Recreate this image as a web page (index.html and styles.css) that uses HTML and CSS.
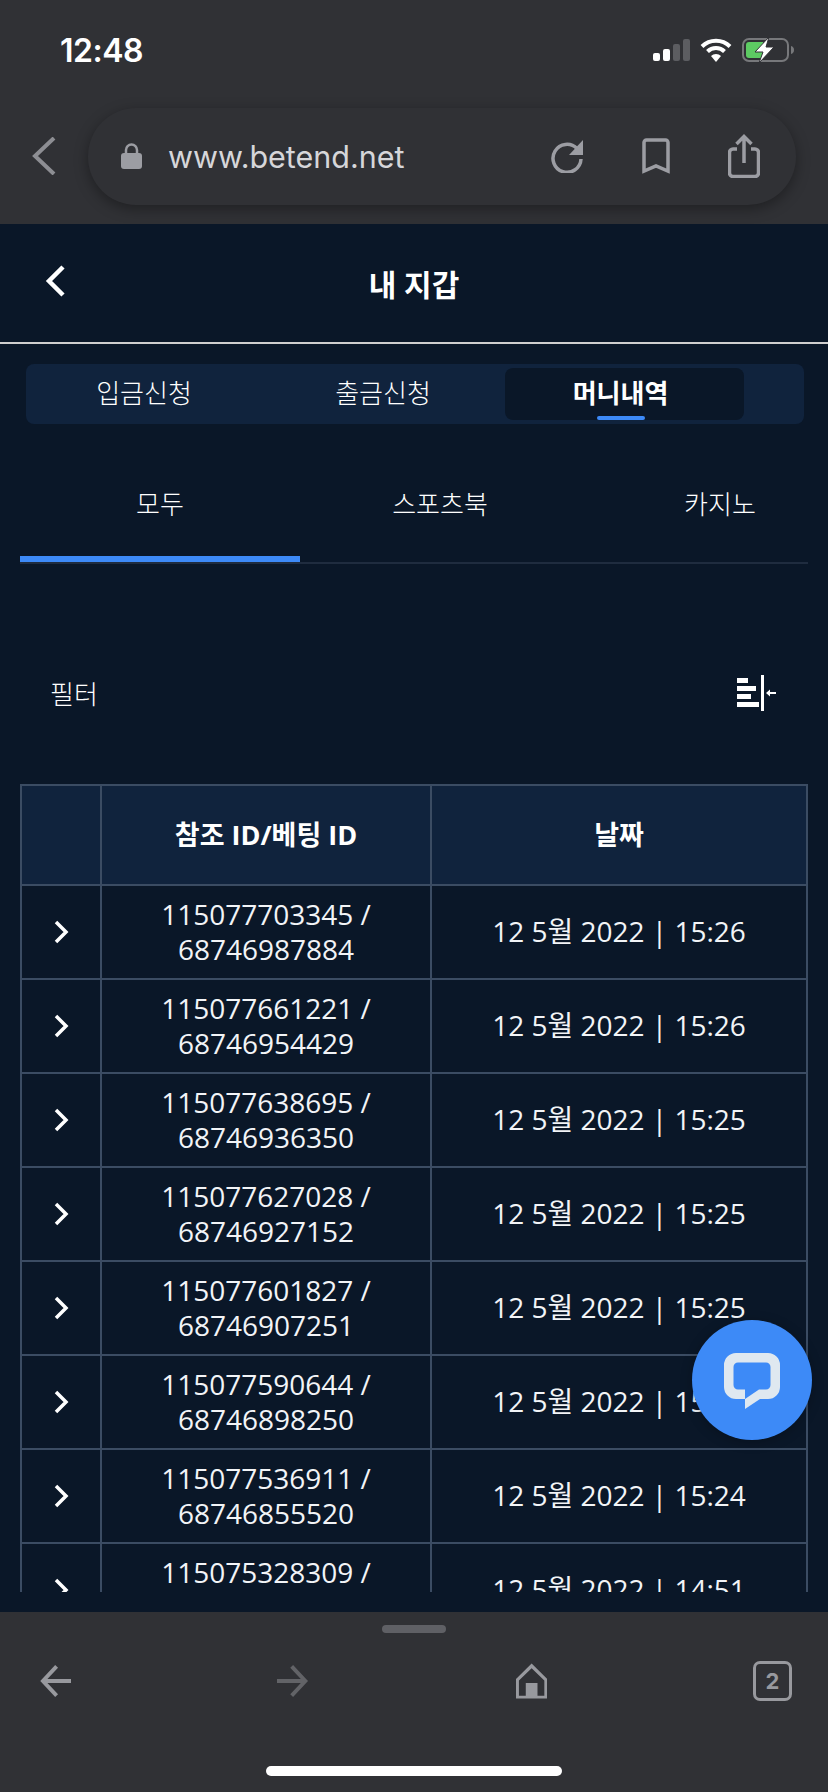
FILE: index.html
```html
<!DOCTYPE html>
<html lang="ko">
  <head>
    <meta charset="UTF-8" />
    <meta name="viewport" content="width=device-width, initial-scale=1.0" />
    <title>내 지갑</title>
    <link rel="stylesheet" href="styles.css">
  </head>
  <body>
    <div class="phone">
      <div class="top-chrome">
        <div class="status-bar">
          <span class="clock">12:48</span>
          <div class="status-icons">
            <svg width="37" height="22" viewBox="0 0 37 22">
              <rect x="0" y="14" width="7" height="8" rx="2" fill="#fff" />
              <rect x="10" y="10" width="7" height="12" rx="2" fill="#fff" />
              <rect x="20" y="5" width="7" height="17" rx="2" fill="#5c5d61" />
              <rect x="30" y="0" width="7" height="22" rx="2" fill="#5c5d61" />
            </svg>
            <svg width="32" height="24" viewBox="0 0 32 24">
              <path d="M2 8.500a20 20 0 0 1 28 0" fill="none" stroke="#fff" stroke-width="4" />
              <path d="M7.500 13.500a12 12 0 0 1 17 0" fill="none" stroke="#fff" stroke-width="4" />
              <path d="M11 18a7 7 0 0 1 10 0l-5 6z" fill="#fff" />
            </svg>
            <svg width="52" height="26" viewBox="0 0 52 26">
              <rect x="1" y="2" width="45" height="22" rx="6" fill="none" stroke="#77787b" stroke-width="2" />
              <path d="M4 8a3 3 0 0 1 3-3H21V21H7a3 3 0 0 1-3-3z" fill="#5dcb63" />
              <path d="M49 9c2 .5 3 2 3 4s-1 3.500-3 4z" fill="#77787b" />
              <path d="M27 0L13 15h8l-4 11 15-16h-8l3-10z" fill="#fff" stroke="#303135" stroke-width="1" />
            </svg>
          </div>
        </div>
        <div class="browser-bar">
          <svg class="browser-back" width="24" height="38" viewBox="0 0 24 38">
            <path d="M22 1L3 19l19 18" fill="none" stroke="#8d8e93" stroke-width="4" />
          </svg>
          <div class="url-pill">
            <svg width="21" height="26" viewBox="0 0 21 26">
              <path d="M5 11V7a5.500 5.500 0 0 1 11 0v4" fill="none" stroke="#9c9da3" stroke-width="2.500" />
              <rect x="0" y="10" width="21" height="16" rx="3" fill="#9c9da3" />
            </svg>
            <span class="url-text">www.betend.net</span>
            <div class="url-actions">
              <svg width="33" height="34" viewBox="0 0 33 34">
                <path d="M26 9.500A14 14 0 1 0 30 20" fill="none" stroke="#9c9da3" stroke-width="3.500" />
                <path d="M32 1v15H18z" fill="#9c9da3" />
              </svg>
              <svg width="28" height="36" viewBox="0 0 28 36">
                <path d="M2 33V4.500A2.500 2.500 0 0 1 4.500 2h19A2.500 2.500 0 0 1 26 4.500V33l-12-5z" fill="none" stroke="#9c9da3" stroke-width="3.500" />
              </svg>
              <svg width="32" height="44" viewBox="0 0 32 44">
                <path d="M9 15H5a3.500 3.500 0 0 0-3.500 3.500V39A3.500 3.500 0 0 0 5 42.500h22a3.500 3.500 0 0 0 3.500-3.500V18.500A3.500 3.500 0 0 0 27 15h-4" fill="none" stroke="#9c9da3" stroke-width="3.500" />
                <path d="M16 29V3M8.500 10L16 2.500l7.500 7.500" fill="none" stroke="#9c9da3" stroke-width="3.500" />
              </svg>
            </div>
          </div>
        </div>
      </div>

      <div class="wallet">
        <div class="page-header">
          <svg class="page-back" width="20" height="32" viewBox="0 0 20 32">
            <path d="M18 2L4 16l14 14" fill="none" stroke="#fff" stroke-width="4.500" />
          </svg>
          <h1 class="page-title">내 지갑</h1>
        </div>

        <div class="segment">
          <div class="segment-item">입금신청</div>
          <div class="segment-item">출금신청</div>
          <div class="segment-item segment-active">머니내역</div>
        </div>

        <div class="sub-tabs">
          <div class="sub-tab sub-tab-active">모두</div>
          <div class="sub-tab">스포츠북</div>
          <div class="sub-tab">카지노</div>
        </div>

        <div class="filter-row">
          <span>필터</span>
          <svg width="39" height="36" viewBox="0 0 39 36">
            <rect x="0" y="3" width="11" height="5" fill="#fff" />
            <rect x="0" y="11" width="19" height="5" fill="#fff" />
            <rect x="0" y="19" width="14" height="5" fill="#fff" />
            <rect x="0" y="27" width="22" height="5" fill="#fff" />
            <rect x="24" y="0" width="3" height="36" fill="#fff" />
            <path d="M29 18l4-3.500V17h6v2h-6v2.500z" fill="#fff" />
          </svg>
        </div>

        <div class="table-clip">
          <table class="history">
            <thead>
              <tr>
                <th class="col-toggle"></th>
                <th class="col-id">참조 ID/베팅 ID</th>
                <th>날짜</th>
              </tr>
            </thead>
            <tbody>
              <tr>
                <td><svg class="row-arrow" width="15" height="24" viewBox="0 0 15 24"><path d="M2 2l10 10L2 22" /></svg></td>
                <td>115077703345 /<br />68746987884</td>
                <td>12 5월 2022 | 15:26</td>
              </tr>
              <tr>
                <td><svg class="row-arrow" width="15" height="24" viewBox="0 0 15 24"><path d="M2 2l10 10L2 22" /></svg></td>
                <td>115077661221 /<br />68746954429</td>
                <td>12 5월 2022 | 15:26</td>
              </tr>
              <tr>
                <td><svg class="row-arrow" width="15" height="24" viewBox="0 0 15 24"><path d="M2 2l10 10L2 22" /></svg></td>
                <td>115077638695 /<br />68746936350</td>
                <td>12 5월 2022 | 15:25</td>
              </tr>
              <tr>
                <td><svg class="row-arrow" width="15" height="24" viewBox="0 0 15 24"><path d="M2 2l10 10L2 22" /></svg></td>
                <td>115077627028 /<br />68746927152</td>
                <td>12 5월 2022 | 15:25</td>
              </tr>
              <tr>
                <td><svg class="row-arrow" width="15" height="24" viewBox="0 0 15 24"><path d="M2 2l10 10L2 22" /></svg></td>
                <td>115077601827 /<br />68746907251</td>
                <td>12 5월 2022 | 15:25</td>
              </tr>
              <tr>
                <td><svg class="row-arrow" width="15" height="24" viewBox="0 0 15 24"><path d="M2 2l10 10L2 22" /></svg></td>
                <td>115077590644 /<br />68746898250</td>
                <td>12 5월 2022 | 15:25</td>
              </tr>
              <tr>
                <td><svg class="row-arrow" width="15" height="24" viewBox="0 0 15 24"><path d="M2 2l10 10L2 22" /></svg></td>
                <td>115077536911 /<br />68746855520</td>
                <td>12 5월 2022 | 15:24</td>
              </tr>
              <tr>
                <td><svg class="row-arrow" width="15" height="24" viewBox="0 0 15 24"><path d="M2 2l10 10L2 22" /></svg></td>
                <td>115075328309 /<br />68745102233</td>
                <td>12 5월 2022 | 14:51</td>
              </tr>
            </tbody>
          </table>
        </div>

        <div class="chat-btn">
          <svg width="56" height="56" viewBox="0 0 56 56">
            <path fill="#dfe8f0" fill-rule="evenodd" d="M12 0H44a12 12 0 0 1 12 12V34a12 12 0 0 1-12 12H36L21 56V46H12A12 12 0 0 1 0 34V12A12 12 0 0 1 12 0Z M14 9.500a4.500 4.500 0 0 0-4.500 4.500V32a4.500 4.500 0 0 0 4.500 4.500H21V46L35 36.500H42a4.500 4.500 0 0 0 4.500-4.500V14a4.500 4.500 0 0 0-4.500-4.500Z" />
          </svg>
        </div>
      </div>

      <div class="bottom-chrome">
        <div class="handle"></div>
        <div class="nav-icons">
          <svg width="32" height="32" viewBox="0 0 32 32">
            <path d="M17 1L3 16l14 15M3 16h29" fill="none" stroke="#98999e" stroke-width="4" />
          </svg>
          <svg width="33" height="32" viewBox="0 0 33 32">
            <path d="M15 1l14 15-14 15M29 16H0" fill="none" stroke="#626367" stroke-width="4" />
          </svg>
          <svg width="32" height="36" viewBox="0 0 32 36">
            <path fill="#98999e" fill-rule="evenodd" d="M16 0L32 16V36H0V16Z M16 5L3 17.500V33H10V20H22V33H29V17.500Z" />
          </svg>
          <div class="tab-count">2</div>
        </div>
        <div class="home-indicator"></div>
      </div>
    </div>
  </body>
</html>
```

FILE: styles.css
```css
* {
  box-sizing: border-box;
}
body {
  margin: 0;
  background-color: #0a1728;
  font-family: "Open Sans", "Noto Sans CJK KR", sans-serif;
  color: white;
}
.phone {
  position: relative;
  width: 828px;
  height: 1792px;
  display: flex;
  flex-direction: column;
  overflow: hidden;
}

/* ios status + safari bar */
.top-chrome {
  height: 224px;
  background-color: #303135;
}
.status-bar {
  height: 100px;
  display: flex;
  align-items: center;
  justify-content: space-between;
  padding: 0 34px 0 60px;
}
.clock {
  font-family: "Inter", sans-serif;
  font-size: 32px;
  font-weight: 600;
  letter-spacing: -0.5px;
}
.status-icons {
  display: flex;
  align-items: center;
  gap: 10px;
}
.browser-bar {
  display: flex;
  align-items: center;
  height: 110px;
  padding-left: 32px;
  margin-top: 1px;
}
.browser-back {
  flex: none;
}
.url-pill {
  width: 708px;
  height: 97px;
  margin-left: 32px;
  padding: 0 36px 0 33px;
  display: flex;
  align-items: center;
  background-color: #303135;
  border-radius: 48px;
  box-shadow: 0 4px 14px rgba(0, 0, 0, 0.35);
}
.url-text {
  margin-left: 26px;
  font-family: "Inter", sans-serif;
  font-size: 30.5px;
  color: #d6d6d9;
}
.url-actions {
  margin-left: auto;
  display: flex;
  align-items: center;
  gap: 58px;
}

/* wallet page */
.wallet {
  position: relative;
  flex: 1;
  display: flex;
  flex-direction: column;
  min-height: 0;
}
.page-header {
  position: relative;
  height: 120px;
  display: flex;
  align-items: center;
  justify-content: center;
  border-bottom: 2px solid #cfcfcf;
}
.page-back {
  position: absolute;
  left: 45px;
  top: 41px;
}
.page-title {
  margin: 0;
  font-size: 30px;
  font-weight: 700;
}
.segment {
  margin: 20px 24px 0 26px;
  height: 60px;
  padding: 4px 0;
  display: grid;
  grid-template-columns: 236px 240px 240px;
  column-gap: 1px;
  background-color: #10233d;
  border-radius: 8px;
}
.segment-item {
  position: relative;
  display: flex;
  align-items: center;
  justify-content: center;
  padding-bottom: 4px;
  font-size: 26px;
  font-weight: 300;
  color: white;
  border-radius: 8px;
}
.segment-active {
  margin-left: 1px;
  padding-right: 8px;
  background-color: #0a1728;
  font-weight: 700;
}
.segment-active::after {
  content: "";
  position: absolute;
  left: 92px;
  bottom: 0;
  width: 48px;
  height: 4px;
  background-color: #3d8af7;
  border-radius: 2px;
}
.sub-tabs {
  margin: 26px 20px 0;
  display: flex;
  border-bottom: 2px solid #1f2c3f;
  overflow: hidden;
}
.sub-tab {
  flex: none;
  width: 280px;
  height: 112px;
  display: flex;
  align-items: center;
  justify-content: center;
  font-size: 26px;
  font-weight: 300;
  border-bottom: 6px solid transparent;
}
.sub-tab-active {
  border-bottom-color: #3d8af7;
}
.filter-row {
  height: 68px;
  margin: 95px 0 57px;
  padding: 0 52px 0 50px;
  display: flex;
  align-items: center;
  justify-content: space-between;
  font-size: 26px;
  font-weight: 300;
}
.table-clip {
  height: 808px;
  margin: 0 20px;
  overflow: hidden;
}
.history {
  width: 788px;
  table-layout: fixed;
  border-collapse: collapse;
  font-size: 28px;
  line-height: 35px;
  text-align: center;
}
.history th,
.history td {
  border: 2px solid #3b4c63;
  padding: 0 8px 1px;
}
.history th {
  height: 100px;
  font-size: 27px;
  font-weight: 700;
  background-color: #10233d;
}
.history td {
  height: 94px;
  font-weight: 400;
  color: #f2f4f7;
}
.col-toggle {
  width: 80px;
}
.col-id {
  width: 330px;
}
.row-arrow {
  display: block;
  margin: 0 auto;
}
.row-arrow path {
  fill: none;
  stroke: white;
  stroke-width: 3.5;
}
.chat-btn {
  position: absolute;
  left: 692px;
  top: 1096px;
  width: 120px;
  height: 120px;
  display: flex;
  align-items: center;
  justify-content: center;
  padding-top: 2px;
  background-color: #3d8af7;
  border-radius: 50%;
  box-shadow: 0 2px 12px rgba(0, 0, 0, 0.25);
}

/* safari toolbar */
.bottom-chrome {
  flex: none;
  height: 180px;
  display: flex;
  flex-direction: column;
  align-items: center;
  background-color: #303135;
}
.handle {
  width: 64px;
  height: 8px;
  margin-top: 13px;
  background-color: #5f6065;
  border-radius: 4px;
}
.nav-icons {
  align-self: stretch;
  height: 40px;
  margin-top: 28px;
  padding: 0 36px 0 40px;
  display: flex;
  align-items: center;
  gap: 206px;
}
.tab-count {
  width: 40px;
  height: 40px;
  margin-left: auto;
  display: flex;
  align-items: center;
  justify-content: center;
  border: 3px solid #98999e;
  border-radius: 7px;
  font-family: "Inter", sans-serif;
  font-size: 22px;
  font-weight: 700;
  color: #98999e;
}
.home-indicator {
  width: 296px;
  height: 10px;
  margin-top: 65px;
  background-color: white;
  border-radius: 5px;
}
```
